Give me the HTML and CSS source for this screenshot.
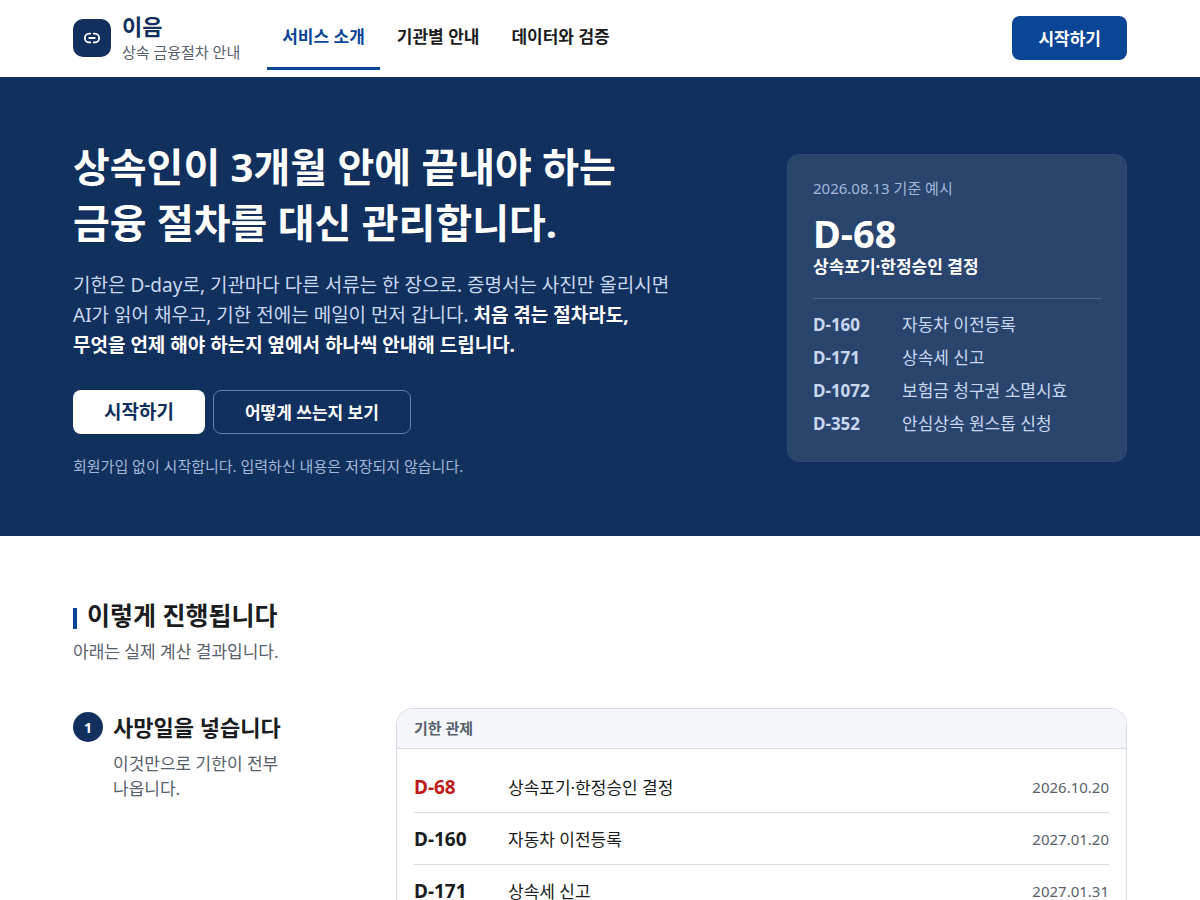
FILE: index.html
```
<!DOCTYPE html>
<html lang="ko">
<head>
<meta charset="utf-8">
<meta name="viewport" content="width=device-width, initial-scale=1">
<title>이음 - 상속 금융절차 안내</title>
<link rel="stylesheet" href="styles.css">
</head>
<body>
<header class="site-header">
  <div class="wrap header-row">
    <a class="brand" href="#">
      <span class="brand-mark">
        <svg viewBox="0 0 18 12" width="18" height="12" fill="none" stroke="currentColor" stroke-width="1.8" stroke-linecap="round" aria-hidden="true"><path d="M7.3 1.6H6.2a4.4 4.4 0 0 0 0 8.8h1.1M10.7 1.6h1.1a4.4 4.4 0 0 1 0 8.8h-1.1M6.2 6h5.6"/></svg>
      </span>
      <span class="brand-text"><strong class="brand-name">이음</strong><span class="brand-sub">상속 금융절차 안내</span></span>
    </a>
    <nav class="nav">
      <a class="nav-link is-active" href="#">서비스 소개</a>
      <a class="nav-link" href="#">기관별 안내</a>
      <a class="nav-link" href="#">데이터와 검증</a>
    </nav>
    <button class="btn btn-primary" type="button">시작하기</button>
  </div>
</header>
<main>
  <section class="hero">
    <div class="wrap hero-row">
      <div class="hero-copy">
        <h1 class="hero-title">상속인이 3개월 안에 끝내야 하는<br>금융 절차를 대신 관리합니다.</h1>
        <p class="hero-lead">기한은 D-day로, 기관마다 다른 서류는 한 장으로. 증명서는 사진만 올리시면 AI가 읽어 채우고, 기한 전에는 메일이 먼저 갑니다. <strong>처음 겪는 절차라도, 무엇을 언제 해야 하는지 옆에서 하나씩 안내해 드립니다.</strong></p>
        <div class="hero-actions">
          <button class="btn btn-light" type="button">시작하기</button>
          <button class="btn btn-outline" type="button">어떻게 쓰는지 보기</button>
        </div>
        <p class="hero-note">회원가입 없이 시작합니다. 입력하신 내용은 저장되지 않습니다.</p>
      </div>
      <aside class="summary">
        <p class="summary-date">2026.08.13 기준 예시</p>
        <p class="summary-count">D-68</p>
        <p class="summary-name">상속포기·한정승인 결정</p>
        <dl class="summary-list">
          <dt>D-160</dt><dd>자동차 이전등록</dd>
          <dt>D-171</dt><dd>상속세 신고</dd>
          <dt>D-1072</dt><dd>보험금 청구권 소멸시효</dd>
          <dt>D-352</dt><dd>안심상속 원스톱 신청</dd>
        </dl>
      </aside>
    </div>
  </section>
  <section class="wrap process">
    <h2 class="section-title">이렇게 진행됩니다</h2>
    <p class="section-sub">아래는 실제 계산 결과입니다.</p>
    <div class="step">
      <div class="step-copy">
        <span class="step-number">1</span>
        <div>
          <h3 class="step-title">사망일을 넣습니다</h3>
          <p class="step-text">이것만으로 기한이 전부 나옵니다.</p>
        </div>
      </div>
      <div class="panel">
        <h4 class="panel-head">기한 관제</h4>
        <table class="deadlines">
          <tbody>
            <tr class="urgent"><th scope="row">D-68</th><td>상속포기·한정승인 결정</td><td class="date">2026.10.20</td></tr>
            <tr><th scope="row">D-160</th><td>자동차 이전등록</td><td class="date">2027.01.20</td></tr>
            <tr><th scope="row">D-171</th><td>상속세 신고</td><td class="date">2027.01.31</td></tr>
          </tbody>
        </table>
      </div>
    </div>
  </section>
</main>
</body>
</html>
```
FILE: styles.css
```
* { box-sizing: border-box; }
body, h1, h2, h3, h4, p, dl, dd { margin: 0; }
body {
  font-family: "Noto Sans", "Noto Sans CJK KR", sans-serif;
  font-size: 17px;
  line-height: 25px;
  color: #1a1c20;
  background: #fff;
  word-break: keep-all;
}
a { color: inherit; text-decoration: none; }
.wrap { max-width: 1102px; margin: 0 auto; padding: 0 24px; }

.site-header { border-bottom: 1px solid #fff; }
.header-row { display: flex; align-items: center; min-height: 76px; }
.brand { display: flex; align-items: center; gap: 11px; }
.brand-mark {
  display: grid;
  place-items: center;
  width: 38px;
  height: 38px;
  border-radius: 10px;
  background: #11305e;
  color: #fff;
}
.brand-text { display: flex; flex-direction: column; }
.brand-name { font-size: 22px; line-height: 28px; color: #11305e; }
.brand-sub { font-size: 15px; line-height: 24px; color: #58616a; }
.nav { display: flex; gap: 2px; margin-left: 27px; }
.nav-link { padding: 18px 15px; font-weight: 700; border-bottom: 3px solid transparent; }
.nav-link.is-active { color: #0b4596; border-color: #0b4596; }

.btn {
  height: 44px;
  padding: 0 26px;
  border: 0;
  border-radius: 8px;
  font: inherit;
  font-weight: 700;
}
.btn-primary { margin-left: auto; background: #0b4596; color: #fff; }
.btn-light { padding: 0 31px; background: #fff; color: #11305e; font-size: 19px; }
.btn-outline { padding: 0 31px; background: transparent; border: 1px solid #6480ad; color: #fff; }

.hero { padding: 62px 0 59px; background: #11305e; color: #fff; }
.hero-row { display: flex; align-items: center; justify-content: space-between; gap: 64px; }
.hero-copy { max-width: 611px; }
.hero-title { font-size: 40px; line-height: 56px; }
.hero-lead { margin-top: 19px; font-size: 19px; line-height: 30px; color: #c9d8f0; }
.hero-lead strong { color: #fff; }
.hero-actions { display: flex; gap: 8px; margin-top: 30px; }
.hero-note { margin-top: 21px; font-size: 15px; line-height: 22px; color: #a3b8da; }

.summary { flex: 0 0 340px; padding: 21px 25px 25px; border: 1px solid #2d4a74; border-radius: 12px; background: #29456e; }
.summary-date { font-size: 15px; color: #a3b8da; }
.summary-count { margin-top: 11px; font-size: 38px; line-height: 42px; font-weight: 700; }
.summary-name { font-weight: 700; }
.summary-list {
  display: grid;
  grid-template-columns: 74px 1fr;
  gap: 8px 15px;
  margin-top: 19px;
  padding-top: 13px;
  border-top: 1px solid #4d6890;
  color: #c9d8f0;
}
.summary-list dt { font-weight: 700; }

.process { padding-top: 63px; padding-bottom: 64px; }
.section-title { display: flex; align-items: flex-end; gap: 10px; font-size: 25px; line-height: 32px; }
.section-title::before { content: ""; width: 4px; height: 21px; margin-bottom: 2px; background: #0b4596; }
.section-sub { margin-top: 8px; color: #58616a; }
.step { display: grid; grid-template-columns: 283px 1fr; gap: 40px; margin-top: 44px; }
.step-copy { display: flex; gap: 10px; padding-top: 4px; }
.step-number {
  display: grid;
  place-items: center;
  flex: none;
  width: 30px;
  height: 30px;
  border-radius: 50%;
  background: #11305e;
  color: #fff;
  font-size: 14px;
  font-weight: 700;
}
.step-title { font-size: 22px; line-height: 30px; }
.step-text { margin-top: 9px; max-width: 190px; color: #58616a; }
.panel { overflow: hidden; border: 1px solid #d8dde5; border-radius: 16px; }
.panel-head { padding: 7px 17px; border-bottom: 1px solid #d8dde5; background: #f4f6fa; font-size: 15px; color: #58616a; }
.deadlines { width: calc(100% - 34px); margin: 11px 17px; border-collapse: collapse; }
.deadlines th, .deadlines td { height: 52px; padding: 3px 0 0; text-align: left; border-bottom: 1px solid #d8dde5; }
.deadlines th { width: 94px; font-size: 19px; }
.deadlines .urgent th { color: #bd1a1a; }
.deadlines .date { text-align: right; font-size: 15px; color: #58616a; }
```
